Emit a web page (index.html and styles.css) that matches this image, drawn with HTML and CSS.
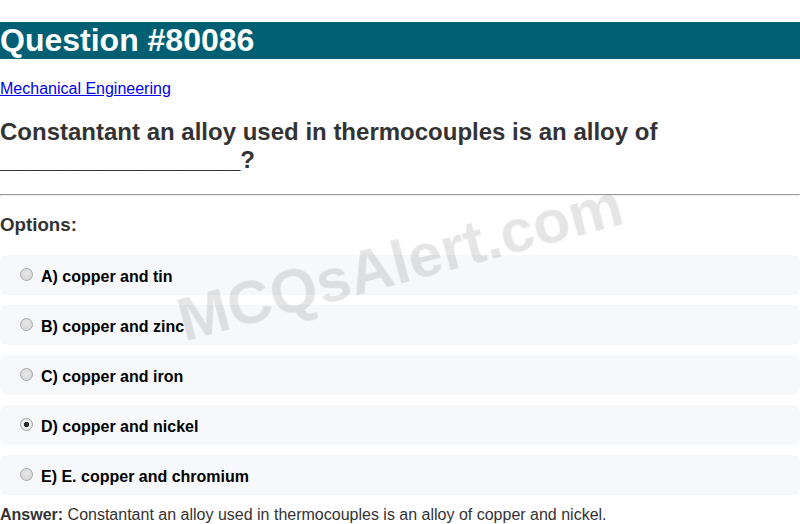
FILE: index.html
```html
<!DOCTYPE html>
<html>
<head>
<meta charset="utf-8">
<link rel="stylesheet" href="styles.css">
</head>
<body>
<h1 class="title">Question #80086</h1>
<a class="category" href="#">Mechanical Engineering</a>
<h2 class="question">Constantant an alloy used in thermocouples is an alloy of __________________?</h2>
<hr class="divider">
<h3 class="options-title">Options:</h3>
<div class="options">
  <label class="option"><input class="radio" type="radio" name="opt"><span>A) copper and tin</span></label>
  <label class="option"><input class="radio" type="radio" name="opt"><span>B) copper and zinc</span></label>
  <label class="option"><input class="radio" type="radio" name="opt"><span>C) copper and iron</span></label>
  <label class="option"><input class="radio" type="radio" name="opt" checked><span>D) copper and nickel</span></label>
  <label class="option"><input class="radio" type="radio" name="opt"><span>E) E. copper and chromium</span></label>
</div>
<div class="answer"><strong>Answer:</strong> Constantant an alloy used in thermocouples is an alloy of copper and nickel.</div>
<div class="watermark">MCQsAlert.com</div>
</body>
</html>
```
FILE: styles.css
```css
html, body {
  margin: 0;
  padding: 0;
  background: #fff;
}
body {
  font-family: "Liberation Sans", Arial, sans-serif;
  font-size: 16px;
  color: #333;
}
.title {
  background: #005f73;
  color: #fff;
  font-size: 32px;
  font-weight: bold;
  margin: 21.5px 0 21.44px;
}
.category {
  display: block;
  color: #0000ee;
  text-decoration: underline;
}
.question {
  font-size: 24px;
  color: #333;
  margin: 19.92px 0;
}
.divider {
  margin: 8px 0;
}
.options-title {
  font-size: 18.72px;
  color: #333;
  margin: 18.72px 0;
}
.options {
  display: flex;
  flex-direction: column;
  gap: 10px;
}
.option {
  display: flex;
  align-items: flex-start;
  background: #f7f8fc;
  border-radius: 8px;
  padding: 13px 15px 9px;
  font-weight: bold;
  color: #000;
  line-height: 18px;
}
.radio {
  appearance: none;
  -webkit-appearance: none;
  width: 13px;
  height: 13px;
  margin: 0 8px 0 5px;
  flex: none;
  border: 1px solid #a9a9a9;
  border-radius: 50%;
  background: radial-gradient(circle at 50% 40%, #e6e6e6 0%, #d4d4d4 100%);
  box-sizing: border-box;
}
.radio:checked {
  background: radial-gradient(circle, #2b2b2b 0, #2b2b2b 2.4px, #f1f1f1 3px, #e2e2e2 100%);
  border-color: #a0a0a0;
}
.answer {
  margin-top: 11px;
  color: #333;
}
.watermark {
  position: fixed;
  left: 50%;
  top: 50%;
  transform: translate(-50%, -50%) rotate(-15deg);
  font-size: 61px;
  font-weight: bold;
  color: rgba(0, 0, 0, 0.1);
  white-space: nowrap;
  pointer-events: none;
}
```
